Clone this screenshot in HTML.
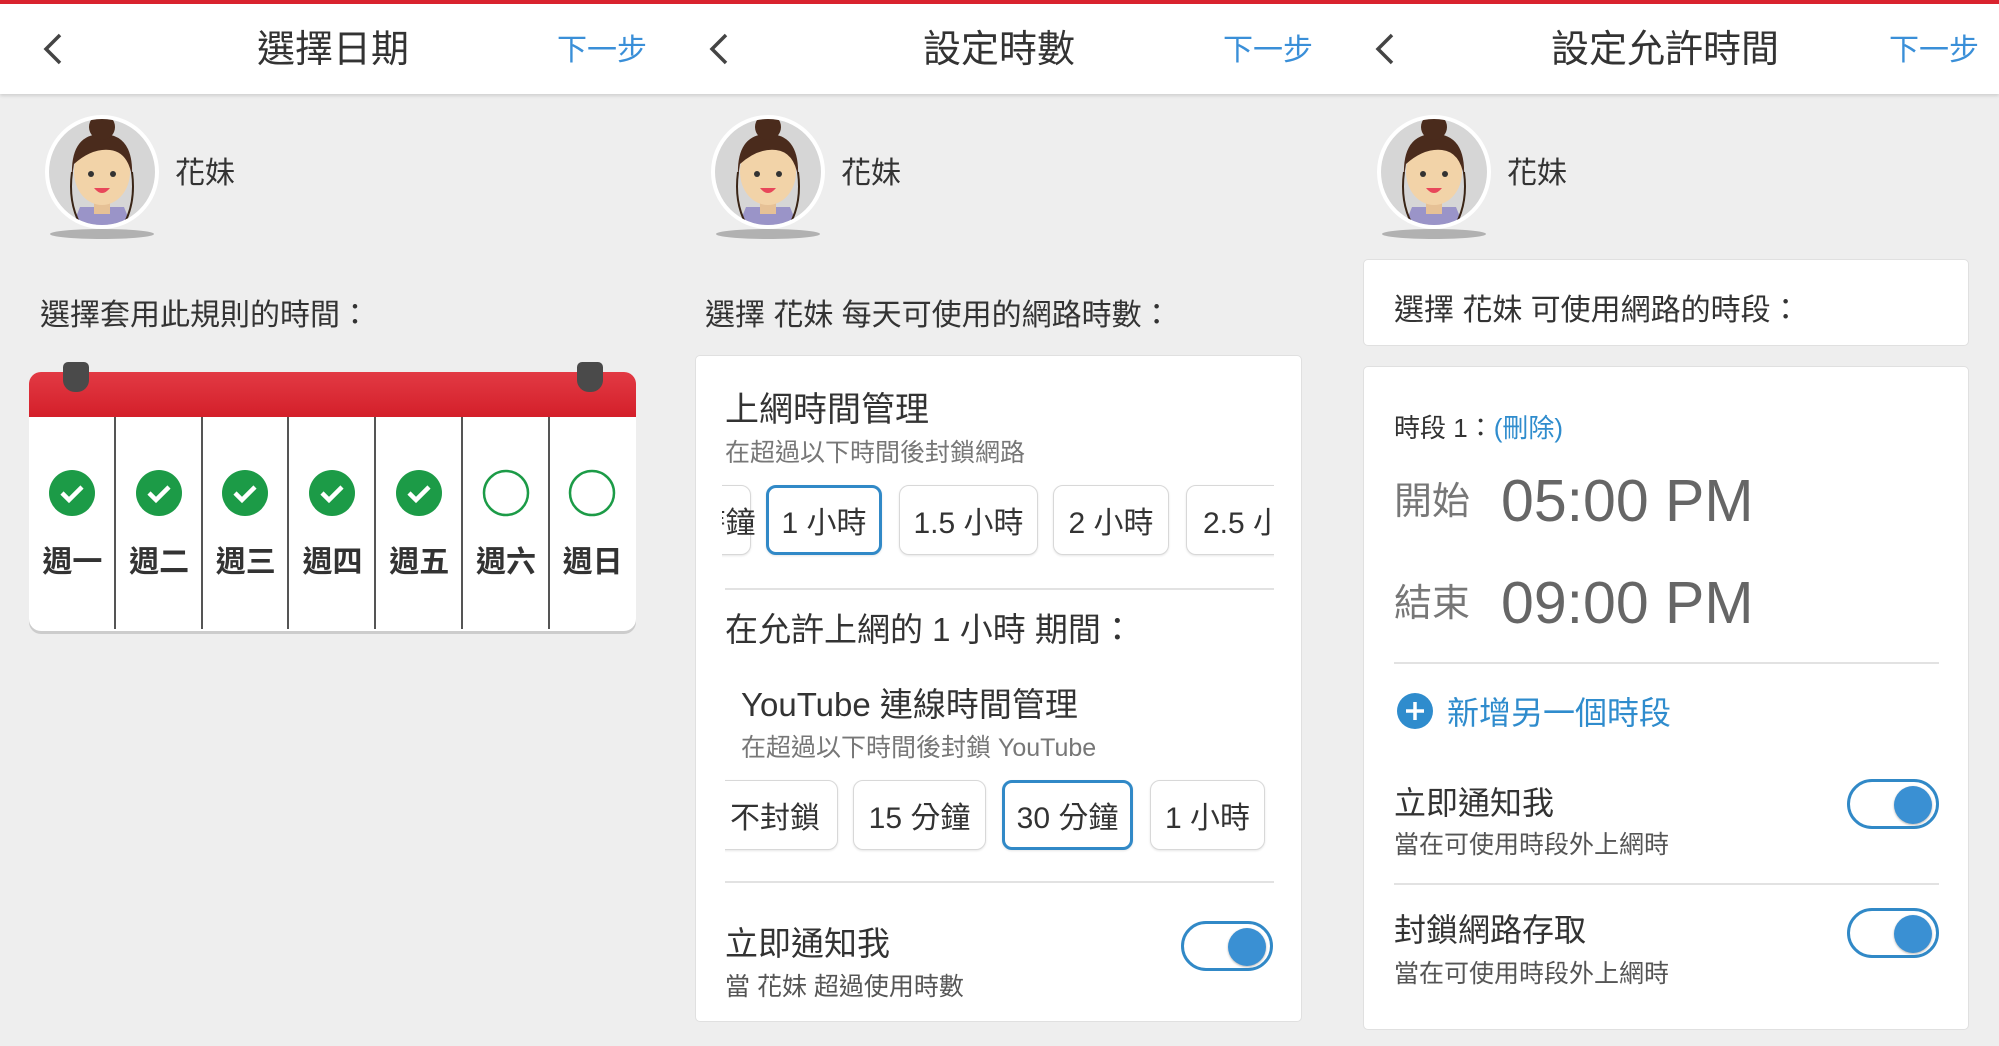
<!DOCTYPE html>
<html><head><meta charset="utf-8"><style>
*{margin:0;padding:0;box-sizing:border-box}
body{width:1999px;height:1046px;background:#eeeeee;position:relative;overflow:hidden;font-family:"Liberation Sans","Noto Sans CJK TC",sans-serif;color:#333}
.a{position:absolute;white-space:nowrap;line-height:1}
.hdr{position:absolute;top:0;left:0;width:1999px;height:94px;background:#fff;border-top:4px solid #d9232e;box-shadow:0 2px 3px rgba(0,0,0,.12)}
.ttl{font-size:38px;color:#333;top:31px;transform:translateX(-50%)}
.nx{font-size:30px;color:#3a8fd8;top:36px}
.card{position:absolute;background:#fff;border:1px solid #e0e0e0;border-radius:5px}
.chip{position:absolute;height:70px;border:1.5px solid #d8d8d8;border-radius:10px;background:#fff;font-size:30px;color:#333;display:flex;align-items:center;justify-content:center;box-shadow:0 1px 2px rgba(0,0,0,.1);white-space:nowrap}
.sel{border:3.5px solid #3189c7}
.tg{position:absolute;width:92px;height:50px;border:3.5px solid #3189c7;border-radius:25px;background:#fff}
.tg i{position:absolute;right:4px;top:4px;width:38px;height:38px;border-radius:50%;background:#3a90d3;box-shadow:0 1px 2px rgba(0,0,0,.3)}
.hr{position:absolute;height:2px;background:#e2e2e2}
.col{position:absolute;top:417px;height:212px;width:87px;border-right:2px solid #555}
</style></head><body>
<div class="hdr"></div>
<svg width="0" height="0" style="position:absolute"><defs>
<g id="av">
<ellipse cx="0" cy="62" rx="52" ry="5" fill="#888" opacity=".6"/>
<circle r="57" fill="#fff"/><circle r="53" fill="#d6d6d6"/>
<clipPath id="cp"><circle r="53"/></clipPath>
<g clip-path="url(#cp)">
<path d="M-30 55 L-22 35 L22 35 L30 55 Z" fill="#9a94c8"/>
<rect x="-8" y="20" width="16" height="22" fill="#e6c196"/>
<ellipse cx="0" cy="0" rx="28" ry="33" fill="#f2d3a8"/>
<path d="M-30 5 Q-32 -38 0 -38 Q32 -38 30 5 Q26 -20 8 -22 Q-10 -24 -28 -8 Z" fill="#4a2b1c"/>
<circle cx="0" cy="-45" r="13" fill="#4a2b1c"/>
<path d="M-30 0 Q-34 30 -22 52" stroke="#3a2516" stroke-width="2" fill="none"/>
<path d="M30 0 Q34 30 22 52" stroke="#3a2516" stroke-width="2" fill="none"/>
<circle cx="-11" cy="2" r="3" fill="#333"/><circle cx="11" cy="2" r="3" fill="#333"/>
<path d="M-8 16 Q0 26 8 16 Z" fill="#e8475a"/>
</g></g></defs></svg>

<!-- Panel 1 -->
<svg class="a" style="left:38px;top:31px" width="30" height="36"><path d="M22 4 L8 18 L22 32" stroke="#444" stroke-width="3.5" fill="none"/></svg>
<div class="a ttl" style="left:333px">選擇日期</div>
<div class="a nx" style="left:557px">下一步</div>
<svg class="a" style="left:42px;top:112px" width="120" height="130"><use href="#av" x="60" y="60"/></svg>
<div class="a" style="left:175px;top:159px;font-size:30px">花妹</div>
<div class="a" style="left:40px;top:301px;font-size:30px">選擇套用此規則的時間：</div>
<div style="position:absolute;left:29px;top:372px;width:607px;height:259px;border-radius:12px;background:#fff;box-shadow:0 3px 0 #ccc;overflow:hidden">
<div style="height:45px;background:linear-gradient(#e23a44,#d41f2a)"></div></div>
<div style="position:absolute;left:63px;top:362px;width:26px;height:30px;background:#4a4a4a;border-radius:5px 5px 12px 12px"></div>
<div style="position:absolute;left:577px;top:362px;width:26px;height:30px;background:#4a4a4a;border-radius:5px 5px 12px 12px"></div>
<div class="col" style="left:29px"></div><div class="col" style="left:116px"></div><div class="col" style="left:202px"></div><div class="col" style="left:289px"></div><div class="col" style="left:376px"></div><div class="col" style="left:463px"></div>
<svg class="a" style="left:29px;top:461px" width="607" height="70">
<g fill="#1c9b47"><circle cx="43" cy="32" r="23"/><circle cx="130" cy="32" r="23"/><circle cx="216" cy="32" r="23"/><circle cx="303" cy="32" r="23"/><circle cx="390" cy="32" r="23"/></g>
<g stroke="#fff" stroke-width="4.5" fill="none"><path d="M33 32 l7 7 l13 -13"/><path d="M120 32 l7 7 l13 -13"/><path d="M206 32 l7 7 l13 -13"/><path d="M293 32 l7 7 l13 -13"/><path d="M380 32 l7 7 l13 -13"/></g>
<g stroke="#1c9b47" stroke-width="2.5" fill="none"><circle cx="477" cy="32" r="22"/><circle cx="563" cy="32" r="22"/></g>
</svg>
<div class="a" style="left:29px;top:548px;width:607px;font-size:30px;font-weight:bold;display:flex;color:#333"><span style="width:87px;text-align:center">週一</span><span style="width:87px;text-align:center">週二</span><span style="width:87px;text-align:center">週三</span><span style="width:87px;text-align:center">週四</span><span style="width:87px;text-align:center">週五</span><span style="width:87px;text-align:center">週六</span><span style="width:87px;text-align:center">週日</span></div>

<!-- Panel 2 -->
<svg class="a" style="left:704px;top:31px" width="30" height="36"><path d="M22 4 L8 18 L22 32" stroke="#444" stroke-width="3.5" fill="none"/></svg>
<div class="a ttl" style="left:999px">設定時數</div>
<div class="a nx" style="left:1223px">下一步</div>
<svg class="a" style="left:708px;top:112px" width="120" height="130"><use href="#av" x="60" y="60"/></svg>
<div class="a" style="left:841px;top:159px;font-size:30px">花妹</div>
<div class="a" style="left:705px;top:301px;font-size:30px">選擇 花妹 每天可使用的網路時數：</div>
<div class="card" style="left:695px;top:355px;width:607px;height:667px"></div>
<div class="a" style="left:725px;top:393px;font-size:34px">上網時間管理</div>
<div class="a" style="left:725px;top:441px;font-size:25px;color:#777">在超過以下時間後封鎖網路</div>
<div style="position:absolute;left:722px;top:480px;width:552px;height:80px;overflow:hidden">
<div class="chip" style="left:-52px;top:5px;width:81px">小時鐘</div>
<div class="chip sel" style="left:44px;top:5px;width:116px">1 小時</div>
<div class="chip" style="left:177px;top:5px;width:139px">1.5 小時</div>
<div class="chip" style="left:331px;top:5px;width:116px">2 小時</div>
<div class="chip" style="left:464px;top:5px;width:139px;justify-content:flex-start;padding-left:16px">2.5 小時</div>
</div>
<div class="hr" style="left:725px;top:588px;width:549px"></div>
<div class="a" style="left:725px;top:613px;font-size:33px">在允許上網的 1 小時 期間：</div>
<div class="a" style="left:741px;top:688px;font-size:33px">YouTube 連線時間管理</div>
<div class="a" style="left:741px;top:736px;font-size:25px;color:#777">在超過以下時間後封鎖 YouTube</div>
<div style="position:absolute;left:725px;top:775px;width:560px;height:80px;overflow:hidden">
<div class="chip" style="left:-13px;top:5px;width:126px">不封鎖</div>
<div class="chip" style="left:128px;top:5px;width:133px">15 分鐘</div>
<div class="chip sel" style="left:277px;top:5px;width:131px">30 分鐘</div>
<div class="chip" style="left:425px;top:5px;width:115px">1 小時</div>
</div>
<div class="hr" style="left:725px;top:881px;width:549px"></div>
<div class="a" style="left:725px;top:927px;font-size:33px">立即通知我</div>
<div class="a" style="left:725px;top:975px;font-size:25px;color:#555">當 花妹 超過使用時數</div>
<div class="tg" style="left:1181px;top:921px"><i></i></div>

<!-- Panel 3 -->
<svg class="a" style="left:1370px;top:31px" width="30" height="36"><path d="M22 4 L8 18 L22 32" stroke="#444" stroke-width="3.5" fill="none"/></svg>
<div class="a ttl" style="left:1665px">設定允許時間</div>
<div class="a nx" style="left:1889px">下一步</div>
<svg class="a" style="left:1374px;top:112px" width="120" height="130"><use href="#av" x="60" y="60"/></svg>
<div class="a" style="left:1507px;top:159px;font-size:30px">花妹</div>
<div class="card" style="left:1363px;top:259px;width:606px;height:87px"></div>
<div class="a" style="left:1394px;top:296px;font-size:30px">選擇 花妹 可使用網路的時段：</div>
<div class="card" style="left:1363px;top:366px;width:606px;height:664px"></div>
<div class="a" style="left:1394px;top:415px;font-size:26px">時段 1：<span style="color:#2f8ccd">(刪除)</span></div>
<div class="a" style="left:1394px;top:483px;font-size:38px;color:#777">開始</div>
<div class="a" style="left:1501px;top:472px;font-size:59px;color:#666">05:00 PM</div>
<div class="a" style="left:1394px;top:585px;font-size:38px;color:#777">結束</div>
<div class="a" style="left:1501px;top:574px;font-size:59px;color:#666">09:00 PM</div>
<div class="hr" style="left:1394px;top:662px;width:545px"></div>
<svg class="a" style="left:1397px;top:693px" width="36" height="36"><circle cx="18" cy="18" r="18" fill="#2f8ccd"/><path d="M18 9 V27 M9 18 H27" stroke="#fff" stroke-width="3.5"/></svg>
<div class="a" style="left:1447px;top:697px;font-size:32px;color:#2f8ccd">新增另一個時段</div>
<div class="a" style="left:1394px;top:787px;font-size:32px">立即通知我</div>
<div class="a" style="left:1394px;top:833px;font-size:25px;color:#555">當在可使用時段外上網時</div>
<div class="tg" style="left:1847px;top:779px"><i></i></div>
<div class="hr" style="left:1394px;top:883px;width:545px"></div>
<div class="a" style="left:1394px;top:914px;font-size:32px">封鎖網路存取</div>
<div class="a" style="left:1394px;top:962px;font-size:25px;color:#555">當在可使用時段外上網時</div>
<div class="tg" style="left:1847px;top:908px"><i></i></div>
</body></html>
